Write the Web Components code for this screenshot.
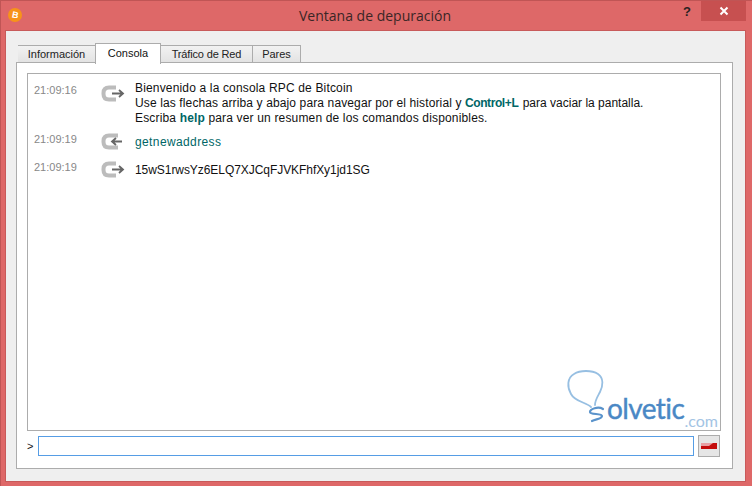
<!DOCTYPE html>
<html lang="es">
<head>
<meta charset="utf-8">
<title>Ventana de depuración</title>
<style>
html,body{margin:0;padding:0;background:#de6868;}
</style>
</head>
<body>
<debug-window>
    <tab-strip></tab-strip>
    <console-panel>
        <console-row time="21:09:16" dir="out" class="first">
            <div style="letter-spacing:.16px">Bienvenido a la consola RPC de Bitcoin</div>
            <div><span style="letter-spacing:.125px">Use las flechas arriba y abajo para navegar por el historial y</span> <b style="color:#006666;letter-spacing:-.4px">Control+L</b> <span style="margin-left:1px">para vaciar la pantalla.</span></div>
            <div style="letter-spacing:.16px">Escriba <b style="color:#006666">help</b> para ver un resumen de los comandos disponibles.</div>
        </console-row>
        <console-row time="21:09:19" dir="in"><span style="color:#006666;letter-spacing:.38px">getnewaddress</span></console-row>
        <console-row time="21:09:19" dir="out"><span style="letter-spacing:-.06px">15wS1rwsYz6ELQ7XJCqFJVKFhfXy1jd1SG</span></console-row>
    </console-panel>
</debug-window>
<script>
class DebugWindow extends HTMLElement{
    constructor(){
        super();
        this.attachShadow({mode:'open'});
    }
    connectedCallback(){
        this.shadowRoot.innerHTML = /*html*/ `
        <style>
            :host{
                display:flex;
                flex-direction:column;
                box-sizing:border-box;
                width:752px;
                height:486px;
                background:#de6868;
                border:1px solid #c05555;
                border-width:1px 0 0 1px;
            }
            .title{
                position:relative;
                height:29px;
                flex:none;
                display:flex;
                align-items:center;
                justify-content:center;
                font:14px "Open Sans",sans-serif;
                color:#3a2626;
            }
            .title span.t{margin-right:3px;}
            .logo{
                position:absolute;
                left:7px;top:7px;
                width:14px;height:14px;
                border-radius:50%;
                background:#f7931a;
                color:#fff;
                font:bold 9px/14px "Liberation Sans",sans-serif;
                text-align:center;
            }
            .logo span{display:inline-block;transform:rotate(12deg);}
            .help{
                position:absolute;
                left:682px;top:3px;
                font:bold 13px/16px "Liberation Sans",sans-serif;
                color:#2b2222;
            }
            .close{
                position:absolute;
                left:700px;top:0;
                width:45px;height:20px;
                background:#c75050;
                display:flex;
                align-items:center;
                justify-content:center;
            }
            .client{
                flex:1;
                margin:0 6px 4px 4px;
                box-sizing:border-box;
                background:#efefef;
                border:1px solid #c85a5a;
                padding:13px 12px 12px 10px;
                display:flex;
                flex-direction:column;
            }
        </style>
        <div class="title">
            <div class="logo"><span>B</span></div>
            <span class="t">Ventana de depuración</span>
            <div class="help">?</div>
            <div class="close">
                <svg width="10" height="10" viewBox="0 0 10 10"><path d="M1.5 1.5l7 7M8.5 1.5l-7 7" stroke="#fff" stroke-width="2"/></svg>
            </div>
        </div>
        <div class="client"><slot></slot></div>
        `;
    }
}
customElements.define("debug-window", DebugWindow);

class TabStrip extends HTMLElement{
    constructor(){
        super();
        this.attachShadow({mode:'open'});
    }
    connectedCallback(){
        this.shadowRoot.innerHTML = /*html*/ `
        <style>
            :host{
                display:flex;
                align-items:flex-end;
                height:19px;
                padding-left:2px;
                position:relative;
                z-index:1;
                margin-bottom:-1px;
                font:11px "Liberation Sans",sans-serif;
                color:#222;
            }
            .tab{
                box-sizing:border-box;
                height:18px;
                border:1px solid #acacac;
                border-left-width:0;
                background:linear-gradient(#f2f2f2,#e3e3e3);
                text-align:center;
                line-height:17px;
            }
            .tab:first-child{border-left-width:1px;}
            .active{
                height:21px;
                margin-bottom:-1px;
                background:#fff;
                border-bottom:0;
                border-left-width:1px;
                margin-left:-1px;
                line-height:19px;
                color:#111;
            }
        </style>
        <div class="tab" style="width:78px">Información</div>
        <div class="tab active" style="width:66px">Consola</div>
        <div class="tab" style="width:92px;letter-spacing:-.15px">Tráfico de Red</div>
        <div class="tab" style="width:48px">Pares</div>
        `;
    }
}
customElements.define("tab-strip", TabStrip);

class ConsolePanel extends HTMLElement{
    constructor(){
        super();
        this.attachShadow({mode:'open'});
    }
    connectedCallback(){
        this.shadowRoot.innerHTML = /*html*/ `
        <style>
            :host{
                display:flex;
                flex-direction:column;
                flex:1;
                box-sizing:border-box;
                background:#fff;
                border:1px solid #acacac;
                padding:10px 11px 11px 10px;
                gap:4px;
            }
            .log{
                flex:1;
                position:relative;
                box-sizing:border-box;
                border:1px solid #acacac;
                padding:7px 0 0 6px;
                display:flex;
                flex-direction:column;
                gap:6px;
            }
            .mark{
                position:absolute;
                right:0;bottom:0;
                width:154px;height:62px;
            }
            .mark svg{position:absolute;left:0;top:0;}
            .mark span{position:absolute;font-family:"Lato",sans-serif;color:#4a88c5;white-space:nowrap;}
            .mark .big{left:41px;top:22px;font-size:28px;line-height:36px;letter-spacing:-.6px;-webkit-text-stroke:.4px #4a88c5;}
            .mark .com{right:2px;top:43px;font-size:16px;line-height:19px;color:#a3c4e4;}
            .prompt{
                display:flex;
                align-items:center;
                height:22px;
                flex:none;
                gap:4px;
            }
            .gt{width:7px;font:11px "Liberation Sans",sans-serif;color:#111;}
            .field{
                box-sizing:border-box;
                width:656px;
                height:20px;
                border:1px solid #569de5;
                background:#fff;
                outline:none;
                margin:0;
                padding:0 2px;
            }
            .btn{
                box-sizing:border-box;
                width:22px;height:22px;
                border:1px solid #acacac;
                background:#e6e6e6;
                display:flex;
                align-items:center;
                justify-content:center;
            }
        </style>
        <div class="log">
            <slot></slot>
            <div class="mark">
                <svg width="154" height="62" viewBox="0 0 154 62" fill="none">
                    <path d="M25 39C20 34 9 34 5 26C1 19 1 10 8 6C14 2 26 2 32 6C38 10 37 18 34 24C32 28 29 32 29 37" stroke="#97bfe2" stroke-width="1.8" stroke-linecap="round"/>
                    <path d="M37 41C32 38 24 41 24 44C24 47 36 45 36 48C36 51 30 51 26 53" stroke="#5a93cb" stroke-width="2.2" stroke-linecap="round"/>
                </svg>
                <span class="big">olvetic</span>
                <span class="com">.com</span>
            </div>
        </div>
        <div class="prompt">
            <div class="gt">&gt;</div>
            <input class="field" type="text">
            <div class="btn">
                <svg width="16" height="6" viewBox="0 0 16 6"><rect width="16" height="6" fill="#c40d0d"/><path d="M0 0H12L8 3H0Z" fill="#e8a0a4"/></svg>
            </div>
        </div>
        `;
    }
}
customElements.define("console-panel", ConsolePanel);

class ConsoleRow extends HTMLElement{
    constructor(){
        super();
        this.attachShadow({mode:'open'});
    }
    connectedCallback(){
        const icon = this.getAttribute('dir') === 'out'
            ? `<path d="M15 2.5H8Q2.5 2.5 2.5 8V9Q2.5 14.5 8 14.5H15" stroke="#bcbcbc" stroke-width="4" fill="none"/>
               <path d="M11 8.5H21M18 5l4 3.5-4 3.5" stroke="#666" stroke-width="1.8" fill="none"/>`
            : `<path d="M17 2.5H8Q2.5 2.5 2.5 8V9Q2.5 14.5 8 14.5H17" stroke="#bcbcbc" stroke-width="4" fill="none"/>
               <path d="M12 8.5H21M15 5l-4 3.5 4 3.5" stroke="#666" stroke-width="1.8" fill="none"/>`;
        this.shadowRoot.innerHTML = /*html*/ `
        <style>
            :host{
                display:grid;
                grid-template-columns:67px 34px 1fr;
                font:12px/15px "Liberation Sans",sans-serif;
                color:#111;
                min-height:22px;
            }
            .time{
                font:11px/15px "Liberation Sans",sans-serif;
                color:#888;
            }
            :host(.first) .time{padding-top:2px;}
            .icon{display:block;margin-top:1px;}
            :host(.first) .icon{margin-top:4px;}
            .msg{padding-top:3px;}
            :host(.first) .msg{padding-top:0;}
        </style>
        <div class="time">${this.getAttribute('time')}</div>
        <div><svg class="icon" width="24" height="17" viewBox="0 0 24 17">${icon}</svg></div>
        <div class="msg"><slot></slot></div>
        `;
    }
}
customElements.define("console-row", ConsoleRow);
</script>
</body>
</html>
